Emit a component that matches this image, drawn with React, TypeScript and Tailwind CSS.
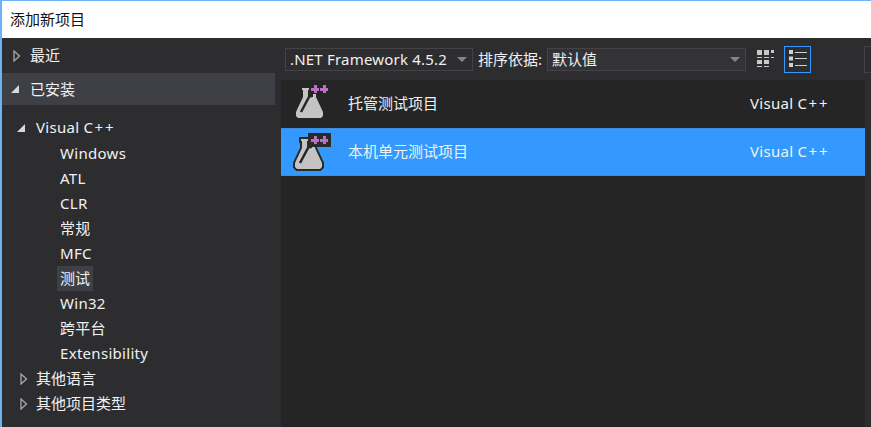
const font = { fontFamily: '"Noto Sans", "Noto Sans CJK SC", sans-serif' };

const Collapsed = () => (
  <svg width="8" height="12" viewBox="0 0 8 12" className="shrink-0">
    <path d="M1 1v10l5.500-5z" fill="none" stroke="#a8a8a8" strokeWidth="1.300" />
  </svg>
);

const Expanded = () => (
  <svg width="8" height="8" viewBox="0 0 8 8" className="shrink-0">
    <path d="M8 0v8H0z" fill="#d8d8d8" />
  </svg>
);

const plus = "M3 0h3v3h2v3H6v2H3V6H0V3h3zM12 0h3v3h2v3h-2v2h-3V6H9V3h3z";
const flask = "M7 5h7v2h-1v8l5-1v-3h3v3l7 15v4l-2 2H3l-2-2v-4l7-15V7H7z";

const Flask = ({ outlined }: { outlined?: boolean }) => (
  <svg width="40" height="42" viewBox="0 0 40 42" className="shrink-0">
    <g transform={outlined ? "translate(3 3)" : "translate(4 0)"}>
      {outlined && <path d={flask} fill="none" stroke="#2a2a2b" strokeWidth="4" strokeLinejoin="miter" />}
      <path d={flask} fill="#c4c4c4" />
      <path d="M14 14L6 29" stroke="#252526" strokeWidth="2.500" fill="none" />
    </g>
    <g transform={outlined ? "translate(20 5)" : "translate(20 2)"}>
      {outlined && <rect x="-3" y="-3" width="23" height="14" fill="#2a2a2b" />}
      <path d={plus} fill="#b872c0" />
    </g>
  </svg>
);

const VisualCpp = () => (
  <span className="tracking-[0.3px]">
    Visual C<span className="tracking-[2px] ml-[1px]">++</span>
  </span>
);

const rows = [
  { label: "托管测试项目", selected: false },
  { label: "本机单元测试项目", selected: true },
];

const children = ["Windows", "ATL", "CLR", "常规", "MFC", "测试", "Win32", "跨平台", "Extensibility"];

export default function App() {
  return (
    <div
      className="w-[871px] h-[427px] flex flex-col overflow-hidden bg-[#2d2d30] text-[15px] border-l-2 border-t border-[#6db2f7]"
      style={font}
    >
      <div className="h-[37px] shrink-0 bg-white text-[#111] flex items-center pl-2">添加新项目</div>

      <div className="flex flex-1 min-h-0">
        {/* left tree */}
        <div className="w-[273px] shrink-0 flex flex-col text-[#f1f1f1]">
          <div className="h-[35px] flex items-center pl-[11px] gap-[9px]">
            <Collapsed />
            <span>最近</span>
          </div>
          <div className="h-8 flex items-center bg-[#3f3f46] pl-[9px] gap-[11px]">
            <Expanded />
            <span>已安装</span>
          </div>
          <div className="h-[10px]" />
          <div className="h-[25px] flex items-center pl-[15px] gap-[11px] mb-[1px]">
            <Expanded />
            <VisualCpp />
          </div>
          {children.map((c) => (
            <div key={c} className="h-[25px] flex items-center pl-[55px]">
              <span className={c === "测试" ? "bg-[#3f3f46] px-[3px] leading-[25px]" : "px-[3px] tracking-[0.3px]"}>{c}</span>
            </div>
          ))}
          {["其他语言", "其他项目类型"].map((c) => (
            <div key={c} className="h-[25px] flex items-center pl-[18px] gap-[8px]">
              <Collapsed />
              <span>{c}</span>
            </div>
          ))}
        </div>

        {/* right side */}
        <div className="flex-1 min-w-0 flex flex-col pl-[6px]">
          <div className="h-[42px] shrink-0 flex items-center text-[#f1f1f1] pl-1">
            <div className="w-[188px] h-[23px] shrink-0 border border-[#434346] flex items-center justify-between pl-1 pr-[5px]">
              <span className="tracking-[0.2px]">.NET Framework 4.5.2</span>
              <span className="border-x-[5px] border-t-[5px] border-x-transparent border-t-[#868686]" />
            </div>
            <span className="ml-[5px] w-[69px] shrink-0">排序依据:</span>
            <div className="w-[199px] h-[23px] shrink-0 bg-[#333337] border border-[#434346] flex items-center justify-between pl-1 pr-[5px]">
              <span>默认值</span>
              <span className="border-x-[5px] border-t-[5px] border-x-transparent border-t-[#868686]" />
            </div>
            <svg width="18" height="18" viewBox="0 0 18 18" className="ml-[11px] shrink-0">
              <path
                d="M0 0h5v5H0zM7 0h5v5H7zM14 0h3v3h-3zM0 7h5v1H0zM7 7h5v1H7zM14 7h3v1h-3zM0 10h5v4H0zM7 10h5v4H7zM0 16h5v1H0zM7 16h5v1H7z"
                fill="#c8c8c8"
              />
            </svg>
            <div className="ml-[9px] w-[27px] h-[27px] shrink-0 border border-[#3399ff] flex items-center justify-center">
              <svg width="18" height="18" viewBox="0 0 18 18">
                <path d="M0 0h4v4H0zM0 6.500h4v4H0zM0 13h4v4H0zM6 2h12v1H6zM6 8h12v1H6zM6 15h12v1H6z" fill="#d0d0d0" />
              </svg>
            </div>
            <div className="ml-[53px] w-[12px] h-[27px] shrink-0 border border-[#434346]" />
          </div>

          <div className="flex-1 w-[584px] bg-[#252526] text-[#f1f1f1]">
            {rows.map((r) => (
              <div
                key={r.label}
                className={`h-[48px] flex ${r.selected ? "bg-[#3399ff] border-y border-[#3c8fe0] pt-[2px]" : "pt-[3px]"}`}
              >
                <div className="w-[67px] pl-[10px] shrink-0">
                  <Flask outlined={r.selected} />
                </div>
                <span className="w-[402px] shrink-0 leading-[40px]">{r.label}</span>
                <span className="leading-[40px]">
                  <VisualCpp />
                </span>
              </div>
            ))}
          </div>
        </div>
      </div>
    </div>
  );
}
